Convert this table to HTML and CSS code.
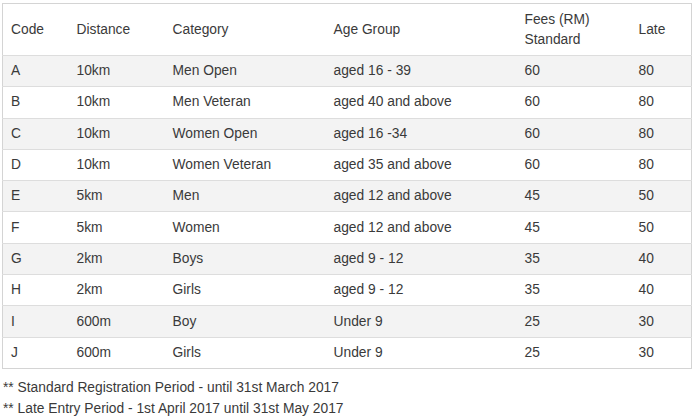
FILE: index.html
```html
<!DOCTYPE html>
<html>
<head>
<meta charset="utf-8">
<link rel="stylesheet" href="styles.css">
</head>
<body>
<div class="page">
  <table class="fees">
    <colgroup>
      <col class="c-code"><col class="c-dist"><col class="c-cat"><col class="c-age"><col class="c-fee"><col class="c-late">
    </colgroup>
    <thead>
      <tr><th>Code</th><th>Distance</th><th>Category</th><th>Age Group</th><th>Fees (RM)<br>Standard</th><th>Late</th></tr>
    </thead>
    <tbody>
      <tr><td>A</td><td>10km</td><td>Men Open</td><td>aged 16 - 39</td><td>60</td><td>80</td></tr>
      <tr><td>B</td><td>10km</td><td>Men Veteran</td><td>aged 40 and above</td><td>60</td><td>80</td></tr>
      <tr><td>C</td><td>10km</td><td>Women Open</td><td>aged 16 -34</td><td>60</td><td>80</td></tr>
      <tr><td>D</td><td>10km</td><td>Women Veteran</td><td>aged 35 and above</td><td>60</td><td>80</td></tr>
      <tr><td>E</td><td>5km</td><td>Men</td><td>aged 12 and above</td><td>45</td><td>50</td></tr>
      <tr><td>F</td><td>5km</td><td>Women</td><td>aged 12 and above</td><td>45</td><td>50</td></tr>
      <tr><td>G</td><td>2km</td><td>Boys</td><td>aged 9 - 12</td><td>35</td><td>40</td></tr>
      <tr><td>H</td><td>2km</td><td>Girls</td><td>aged 9 - 12</td><td>35</td><td>40</td></tr>
      <tr><td>I</td><td>600m</td><td>Boy</td><td>Under 9</td><td>25</td><td>30</td></tr>
      <tr><td>J</td><td>600m</td><td>Girls</td><td>Under 9</td><td>25</td><td>30</td></tr>
    </tbody>
  </table>
  <div class="notes">
    <p>** Standard Registration Period - until 31st March 2017</p>
    <p>** Late Entry Period - 1st April 2017 until 31st May 2017</p>
  </div>
</div>
</body>
</html>
```
FILE: styles.css
```css
html, body {
  margin: 0;
  padding: 0;
  background: #fff;
}
body {
  font-family: "Liberation Sans", Arial, sans-serif;
  font-size: 13.8px;
  color: #3a3a3a;
}
.page {
  padding: 3px 0 0 2px;
}
.fees {
  border-collapse: collapse;
  table-layout: fixed;
  width: 689px;
  border: 1px solid #d4d4d4;
}
.c-code { width: 66px; }
.c-dist { width: 96px; }
.c-cat { width: 161px; }
.c-age { width: 191px; }
.c-fee { width: 114px; }
.c-late { width: 61px; }
.fees th {
  font-weight: normal;
  text-align: left;
  vertical-align: middle;
  padding: 0 8px;
  height: 51px;
  line-height: 20px;
  border-bottom: 1px solid #ddd;
}
.fees td {
  padding: 0 8px;
  height: 30.3px;
  line-height: 18px;
  vertical-align: middle;
  border-top: 1px solid #ddd;
}
.fees tbody tr:nth-child(odd) td {
  background: #f3f3f3;
}
.notes {
  padding: 8px 0 0 1px;
}
.notes p {
  margin: 0;
  line-height: 21px;
}
```
